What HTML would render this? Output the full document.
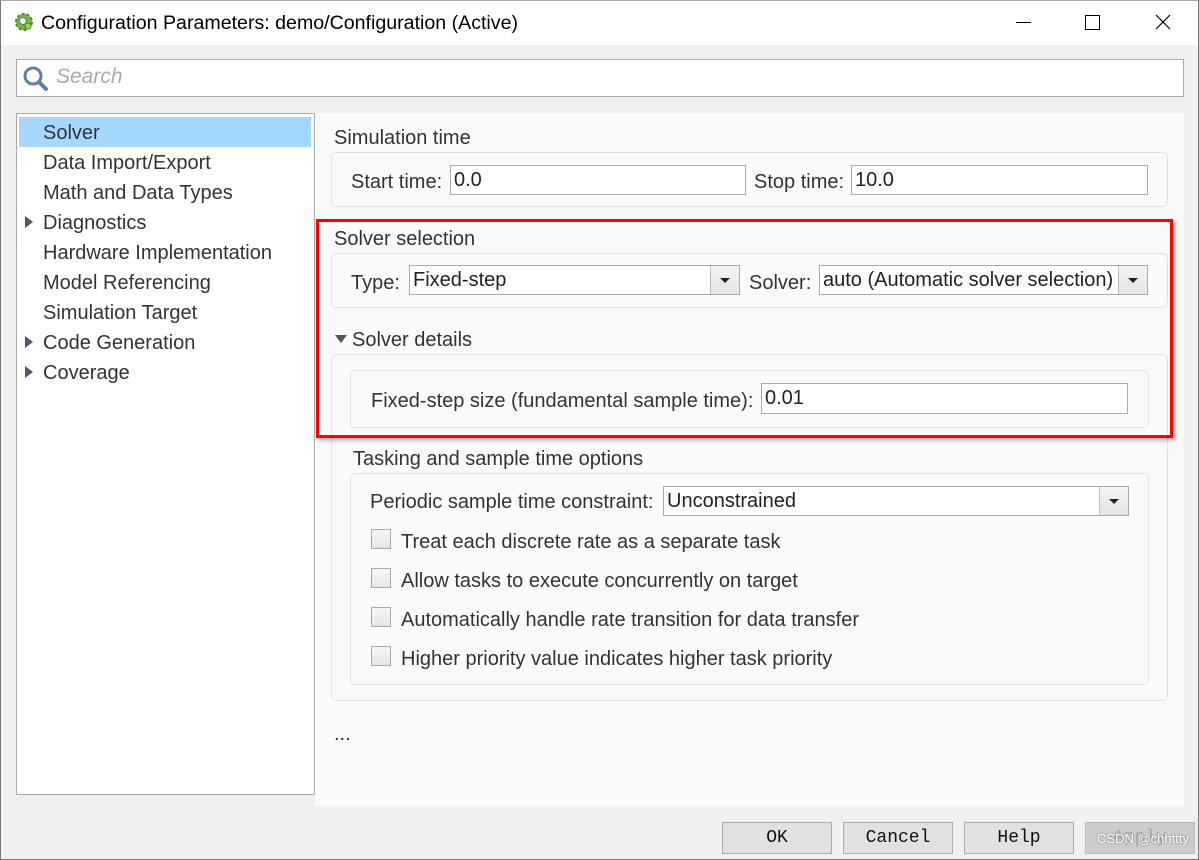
<!DOCTYPE html>
<html><head><meta charset="utf-8"><style>
*{margin:0;padding:0;box-sizing:border-box}
body{width:1199px;height:860px;overflow:hidden;background:#f0f0f0;font-family:"Liberation Sans",sans-serif;color:#333;position:relative}
.a{position:absolute}
.t{position:absolute;font-size:20px;line-height:22px;white-space:nowrap;color:#333}
.box{position:absolute;border:1px solid #e2e2e2;border-radius:5px;background:#fafafa}
.in{position:absolute;background:#fff;border:1px solid #aaa;font-size:20px;line-height:28px;padding-left:3px;color:#222;white-space:nowrap;overflow:hidden}
.dd{position:absolute;right:0;top:0;bottom:0;width:29px;border-left:1px solid #bbb;background:linear-gradient(#f4f4f4,#e4e4e4)}
.dd:after{content:"";position:absolute;left:9px;top:12px;border-left:5px solid transparent;border-right:5px solid transparent;border-top:5px solid #222}
.cb{position:absolute;width:20px;height:20px;border:1px solid #aaa;background:linear-gradient(#f6f6f6,#e6e6e6)}
.tri{position:absolute;border-top:6px solid transparent;border-bottom:6px solid transparent;border-left:8px solid #4a5a6a}
.btn{position:absolute;top:822px;height:32px;width:110px;border:1px solid #adadad;background:#e1e1e1;font-family:"Liberation Mono",monospace;font-size:18px;text-align:center;line-height:30px;color:#111}
</style></head><body>
<div class="a" style="left:0;top:0;width:1199px;height:45px;background:#fff"></div>
<svg class="a" style="left:13px;top:11px" width="22" height="22" viewBox="0 0 22 22"><circle cx="11" cy="11" r="8" fill="#7ab648" stroke="#4f8a2a" stroke-width="2" stroke-dasharray="3 2"/><circle cx="10" cy="10" r="3.5" fill="#fff" stroke="#4f8a2a"/><circle cx="15" cy="15" r="3" fill="#9cd06a" stroke="#4f8a2a"/></svg>
<div class="t" style="left:41px;top:12px;font-size:19.6px;color:#000">Configuration Parameters: demo/Configuration (Active)</div>
<div class="a" style="left:1016px;top:22px;width:15px;height:1px;background:#000"></div>
<div class="a" style="left:1085px;top:15px;width:15px;height:15px;border:1px solid #000"></div>
<svg class="a" style="left:1155px;top:14px" width="16" height="16"><path d="M1 1L15 15M15 1L1 15" stroke="#000" stroke-width="1.2"/></svg>

<div class="a" style="left:16px;top:59px;width:1168px;height:38px;background:#fff;border:1px solid #aaa"></div>
<svg class="a" style="left:21px;top:64px" width="28" height="28"><circle cx="12" cy="12" r="8" fill="none" stroke="#5b7fa6" stroke-width="3"/><path d="M18 18L25 25" stroke="#5b7fa6" stroke-width="4" stroke-linecap="round"/></svg>
<div class="t" style="left:56px;top:66px;font-style:italic;color:#aaa;font-size:21px">Search</div>

<div class="a" style="left:16px;top:113px;width:299px;height:682px;background:#fff;border:1px solid #aaa"></div>
<div class="a" style="left:19px;top:117px;width:292px;height:30px;background:#a5d8ff"></div>
<div class="t" style="left:43px;top:122px">Solver</div>
<div class="t" style="left:43px;top:152px">Data Import/Export</div>
<div class="t" style="left:43px;top:182px">Math and Data Types</div>
<div class="tri" style="left:25px;top:216px"></div><div class="t" style="left:43px;top:212px">Diagnostics</div>
<div class="t" style="left:43px;top:242px">Hardware Implementation</div>
<div class="t" style="left:43px;top:272px">Model Referencing</div>
<div class="t" style="left:43px;top:302px">Simulation Target</div>
<div class="tri" style="left:25px;top:336px"></div><div class="t" style="left:43px;top:332px">Code Generation</div>
<div class="tri" style="left:25px;top:366px"></div><div class="t" style="left:43px;top:362px">Coverage</div>

<div class="a" style="left:315px;top:113px;width:869px;height:693px;background:#fafafa"></div>
<div class="t" style="left:334px;top:127px">Simulation time</div>
<div class="box" style="left:331px;top:152px;width:837px;height:55px"></div>
<div class="t" style="left:351px;top:171px">Start time:</div>
<div class="in" style="left:450px;top:165px;width:296px;height:30px;line-height:29px">0.0</div>
<div class="t" style="left:754px;top:171px">Stop time:</div>
<div class="in" style="left:851px;top:165px;width:297px;height:30px;line-height:29px">10.0</div>

<div class="t" style="left:334px;top:228px">Solver selection</div>
<div class="box" style="left:331px;top:253px;width:837px;height:55px"></div>
<div class="t" style="left:351px;top:272px">Type:</div>
<div class="in" style="left:409px;top:265px;width:331px;height:30px">Fixed-step<div class="dd"></div></div>
<div class="t" style="left:749px;top:272px">Solver:</div>
<div class="in" style="left:819px;top:265px;width:329px;height:30px">auto (Automatic solver selection)<div class="dd"></div></div>

<div class="a" style="left:335px;top:335px;border-left:6px solid transparent;border-right:6px solid transparent;border-top:8px solid #555"></div>
<div class="t" style="left:352px;top:329px">Solver details</div>
<div class="box" style="left:331px;top:354px;width:837px;height:347px"></div>
<div class="box" style="left:350px;top:370px;width:799px;height:58px"></div>
<div class="t" style="left:371px;top:390px">Fixed-step size (fundamental sample time):</div>
<div class="in" style="left:761px;top:383px;width:367px;height:31px">0.01</div>

<div class="t" style="left:353px;top:448px">Tasking and sample time options</div>
<div class="box" style="left:350px;top:473px;width:799px;height:212px"></div>
<div class="t" style="left:370px;top:491px">Periodic sample time constraint:</div>
<div class="in" style="left:663px;top:486px;width:466px;height:30px">Unconstrained<div class="dd"></div></div>
<div class="cb" style="left:371px;top:529px"></div><div class="t" style="left:401px;top:531px">Treat each discrete rate as a separate task</div>
<div class="cb" style="left:371px;top:568px"></div><div class="t" style="left:401px;top:570px">Allow tasks to execute concurrently on target</div>
<div class="cb" style="left:371px;top:607px"></div><div class="t" style="left:401px;top:609px">Automatically handle rate transition for data transfer</div>
<div class="cb" style="left:371px;top:646px"></div><div class="t" style="left:401px;top:648px">Higher priority value indicates higher task priority</div>
<div class="t" style="left:334px;top:723px">...</div>

<div class="a" style="left:316px;top:219px;width:857px;height:219px;border:3px solid #f00;box-shadow:2px 2px 4px rgba(0,0,0,.35)"></div>

<div class="btn" style="left:722px">OK</div>
<div class="btn" style="left:843px">Cancel</div>
<div class="btn" style="left:964px">Help</div>
<div class="btn" style="left:1085px;background:#ccc;border-color:#bbb;color:#aaa">Apply</div>
<div class="a" style="left:1097px;top:831px;font-size:13px;color:#fff;text-shadow:0 0 2px #666">CSDN @chhttty</div>
<div class="a" style="left:0;top:0;width:1199px;height:860px;border:1px solid #777;border-top-color:#aaa"></div>
</body></html>
